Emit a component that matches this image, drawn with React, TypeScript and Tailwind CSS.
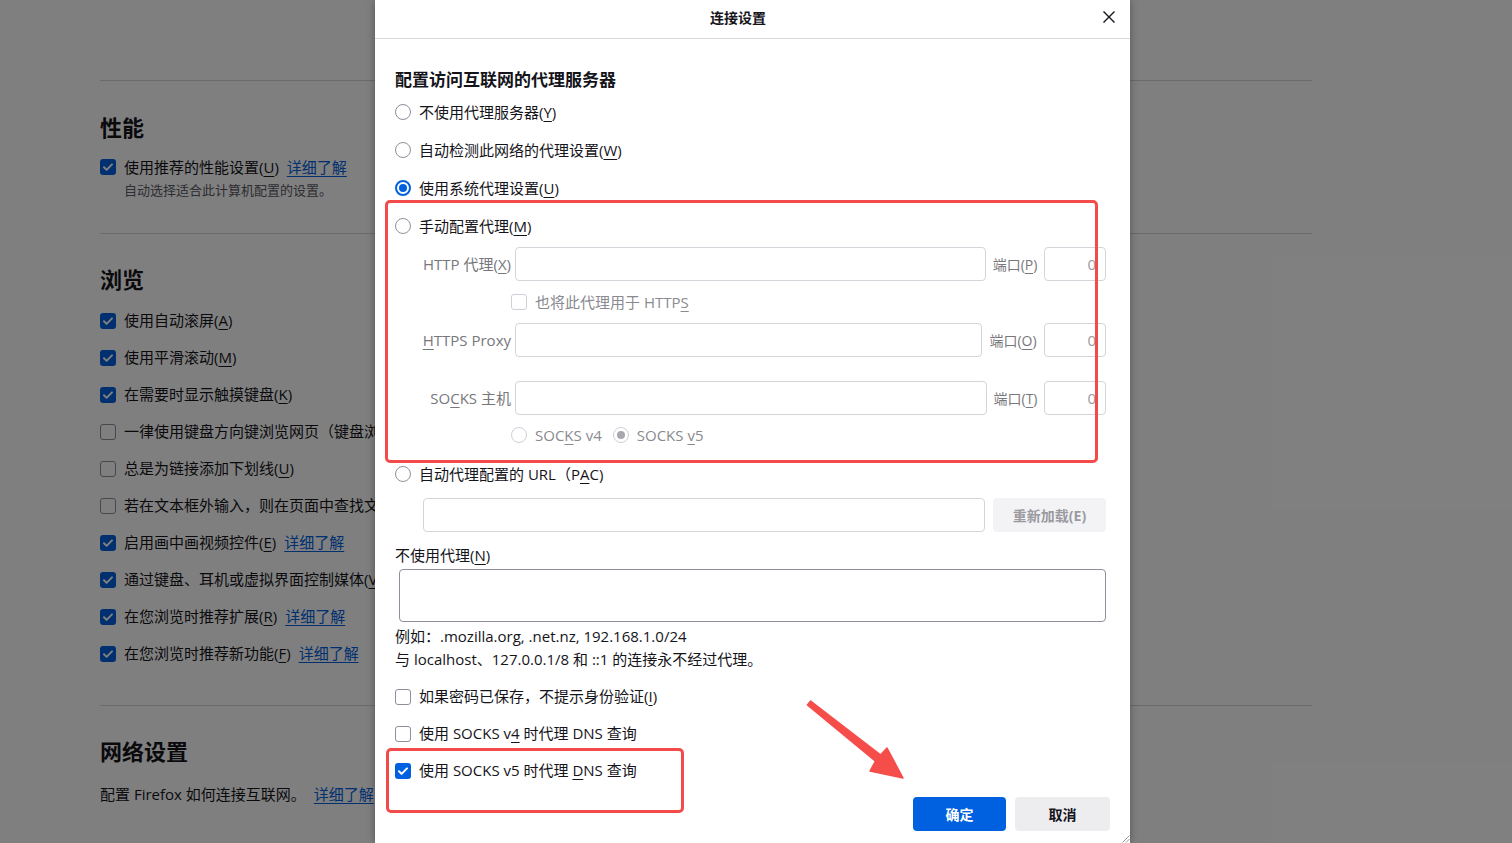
import type { ReactNode } from "react";

function U({ children }: { children: ReactNode }) {
  return <span className="underline decoration-1 underline-offset-[3px]">{children}</span>;
}

function Check({ checked = false, disabled = false }: { checked?: boolean; disabled?: boolean }) {
  if (checked)
    return (
      <span className="flex h-4 w-4 shrink-0 items-center justify-center rounded-[3px] bg-[#0061e0]">
        <svg viewBox="0 0 16 16" className="h-4 w-4" fill="none" stroke="white" strokeWidth="2" strokeLinecap="round" strokeLinejoin="round">
          <path d="M4 8.3l2.6 2.6L12 5.4" />
        </svg>
      </span>
    );
  return (
    <span
      className={
        disabled
          ? "h-4 w-4 shrink-0 rounded-[3px] border border-[#cfcfd8] bg-white"
          : "h-4 w-4 shrink-0 rounded-[3px] border border-[#8f8f9d] bg-white"
      }
    />
  );
}

function Radio({ selected = false, disabled = false }: { selected?: boolean; disabled?: boolean }) {
  if (selected && disabled)
    return (
      <span className="flex h-4 w-4 shrink-0 items-center justify-center rounded-full border border-[#cfcfd8] bg-white">
        <span className="h-2 w-2 rounded-full bg-[#a8a8b0]" />
      </span>
    );
  if (selected)
    return (
      <span className="flex h-4 w-4 shrink-0 items-center justify-center rounded-full border-2 border-[#0061e0] bg-white">
        <span className="h-2 w-2 rounded-full bg-[#0061e0]" />
      </span>
    );
  return (
    <span
      className={
        disabled
          ? "h-4 w-4 shrink-0 rounded-full border border-[#cfcfd8] bg-white"
          : "h-4 w-4 shrink-0 rounded-full border border-[#8f8f9d] bg-white"
      }
    />
  );
}

const Link = () => <span className="text-[#0061e0] underline underline-offset-[3px]">详细了解</span>;

const browseRows: { checked: boolean; text: ReactNode; link?: boolean }[] = [
  { checked: true, text: <>使用自动滚屏(<U>A</U>)</> },
  { checked: true, text: <>使用平滑滚动(<U>M</U>)</> },
  { checked: true, text: <>在需要时显示触摸键盘(<U>K</U>)</> },
  { checked: false, text: <>一律使用键盘方向键浏览网页（键盘浏览模式）(<U>C</U>)</> },
  { checked: false, text: <>总是为链接添加下划线(<U>U</U>)</> },
  { checked: false, text: <>若在文本框外输入，则在页面中查找文本(<U>X</U>)</> },
  { checked: true, text: <>启用画中画视频控件(<U>E</U>)</>, link: true },
  { checked: true, text: <>通过键盘、耳机或虚拟界面控制媒体(<U>V</U>)</> },
  { checked: true, text: <>在您浏览时推荐扩展(<U>R</U>)</>, link: true },
  { checked: true, text: <>在您浏览时推荐新功能(<U>F</U>)</>, link: true },
];

function SettingsPage() {
  return (
    <div className="w-[1312px] pl-[100px] text-[15px] text-[#15141a]">
      <div className="mt-[80px] h-px bg-[#d6d6da]" />
      <h1 className="mt-[31px] h-[30px] text-[22px] font-bold leading-[30px]">性能</h1>
      <div className="mt-[13px] flex h-[24px] items-center gap-2">
        <Check checked />
        <span>
          使用推荐的性能设置(<U>U</U>)
        </span>
        <Link />
      </div>
      <p className="mt-[2px] h-[18px] pl-6 text-[13px] leading-[18px] text-[#5b5b66]">自动选择适合此计算机配置的设置。</p>
      <div className="mt-[34px] h-px bg-[#d6d6da]" />
      <h1 className="mt-[30px] h-[30px] text-[22px] font-bold leading-[30px]">浏览</h1>
      <div className="mt-[8px]">
        {browseRows.map((r, i) => (
          <div key={i} className="flex h-[37px] items-center gap-2">
            <Check checked={r.checked} />
            <span>{r.text}</span>
            {r.link && <Link />}
          </div>
        ))}
      </div>
      <div className="mt-[33px] h-px bg-[#d6d6da]" />
      <h1 className="mt-[30px] h-[30px] text-[22px] font-bold leading-[30px]">网络设置</h1>
      <div className="mt-[16px] flex h-[24px] items-center gap-2">
        <span>配置 Firefox 如何连接互联网。</span>
        <Link />
      </div>
    </div>
  );
}

function Field({ label, width, port, portKey }: { label: ReactNode; width: number; port: string; portKey: string }) {
  return (
    <div className="flex h-[34px] items-center pl-[24px]">
      <span className="w-[92px] shrink-0 whitespace-nowrap text-right text-[#77777c]">{label}</span>
      <span className="ml-[4px] h-[34px] shrink-0 rounded-[4px] border border-[#d4d4da]" style={{ width }} />
      <span className="flex-1 whitespace-nowrap text-center text-[14px] text-[#77777c]">
        {port}(<U>{portKey}</U>)
      </span>
      <span className="flex h-[34px] w-[62px] shrink-0 items-center justify-end rounded-[4px] border border-[#d4d4da] pr-[9px] text-[#9a9aa2]">
        0
      </span>
    </div>
  );
}

function ConnectionDialog() {
  return (
    <div className="absolute left-[375px] top-0 h-[843px] w-[755px] bg-white text-[15px] text-[#15141a] shadow-[0_0_8px_rgba(0,0,0,0.35)]">
      <div className="flex h-[39px] items-center border-b border-[#dadade] pb-[4px] pl-[13px]">
        <span className="flex-1 text-center text-[14px] font-bold">连接设置</span>
        <span className="flex w-[42px] items-center justify-center">
          <svg viewBox="0 0 14 14" className="h-[14px] w-[14px]" stroke="#15141a" strokeWidth="1.4">
            <path d="M1.5 1.5l11 11M12.5 1.5l-11 11" />
          </svg>
        </span>
      </div>

      <div className="pl-[20px] pr-[24px]">
        <h2 className="mt-[29px] h-[24px] text-[17px] font-bold leading-[24px]">配置访问互联网的代理服务器</h2>
        <div className="mt-px">
          <div className="flex h-[38px] items-center gap-2">
            <Radio />
            <span>
              不使用代理服务器(<U>Y</U>)
            </span>
          </div>
          <div className="flex h-[38px] items-center gap-2">
            <Radio />
            <span>
              自动检测此网络的代理设置(<U>W</U>)
            </span>
          </div>
          <div className="flex h-[38px] items-center gap-2">
            <Radio selected />
            <span>
              使用系统代理设置(<U>U</U>)
            </span>
          </div>
          <div className="flex h-[38px] items-center gap-2">
            <Radio />
            <span>
              手动配置代理(<U>M</U>)
            </span>
          </div>
        </div>

        <div className="mt-[2px]">
          <Field label={<>HTTP 代理(<U>X</U>)</>} width={471} port="端口" portKey="P" />
          <div className="flex h-[42px] items-center gap-2 pl-[116px] text-[#8a8a90]">
            <Check disabled />
            <span>
              也将此代理用于 HTTP<U>S</U>
            </span>
          </div>
          <Field label={<><U>H</U>TTPS Proxy</>} width={467} port="端口" portKey="O" />
          <div className="mt-[24px]">
            <Field label={<>SO<U>C</U>KS 主机</>} width={472} port="端口" portKey="T" />
          </div>
          <div className="flex h-[40px] items-center pl-[116px] text-[#8a8a90]">
            <Radio disabled />
            <span className="ml-2">
              SOC<U>K</U>S v4
            </span>
            <span className="ml-[11px]">
              <Radio selected disabled />
            </span>
            <span className="ml-2">
              SOCKS <U>v</U>5
            </span>
          </div>
        </div>

        <div className="flex h-[38px] items-center gap-2">
          <Radio />
          <span>
            自动代理配置的 URL（P<U>A</U>C)
          </span>
        </div>
        <div className="mt-[5px] flex h-[34px] items-center gap-2 pl-[28px]">
          <span className="h-[34px] flex-1 rounded-[4px] border border-[#d4d4da]" />
          <span className="flex h-[34px] w-[113px] items-center justify-center rounded-[4px] bg-[#f3f3f5] text-[14px] font-bold text-[#9a9aa0]">
            重新加载(E)
          </span>
        </div>

        <div className="mt-[12px] h-[22px] leading-[22px]">
          不使用代理(<U>N</U>)
        </div>
        <div className="ml-[4px] mt-[3px] h-[53px] rounded-[4px] border border-[#8f8f9d]" />
        <div className="mt-[3px] text-[15px] leading-[23px]">
          <p>例如：.mozilla.org, .net.nz, 192.168.1.0/24</p>
          <p>与 localhost、127.0.0.1/8 和 ::1 的连接永不经过代理。</p>
        </div>

        <div className="mt-[7px]">
          <div className="flex h-[37px] items-center gap-2">
            <Check />
            <span>
              如果密码已保存，不提示身份验证(<U>I</U>)
            </span>
          </div>
          <div className="flex h-[37px] items-center gap-2">
            <Check />
            <span>
              使用 SOCKS v<U>4</U> 时代理 DNS 查询
            </span>
          </div>
          <div className="flex h-[37px] items-center gap-2">
            <Check checked />
            <span>
              使用 SOCKS v5 时代理 <U>D</U>NS 查询
            </span>
          </div>
        </div>

        <div className="-mr-[4px] mt-[8px] flex justify-end gap-[9px] text-[14px] font-bold">
          <span className="flex h-[34px] w-[93px] items-center justify-center rounded-[4px] bg-[#0061e0] text-white">确定</span>
          <span className="flex h-[34px] w-[95px] items-center justify-center rounded-[4px] bg-[#ededf0]">取消</span>
        </div>
      </div>

      <svg className="absolute bottom-0 right-0 h-[9px] w-[9px]" viewBox="0 0 9 9" stroke="#9a9a9a" strokeWidth="1">
        <path d="M8.5 1.5L1.5 8.5M8.5 5L5 8.5" />
      </svg>
    </div>
  );
}

export default function App() {
  return (
    <div className="relative h-[843px] w-full overflow-hidden bg-white [font-family:'Open_Sans','Noto_Sans_CJK_SC',sans-serif]">
      <SettingsPage />
      <div className="absolute inset-0 bg-black/50" />
      <ConnectionDialog />

      {/* annotations */}
      <div className="pointer-events-none absolute left-[385px] top-[200px] h-[263px] w-[713px] rounded-[5px] border-[3px] border-[#f34b4a]" />
      <div className="pointer-events-none absolute left-[386px] top-[748px] h-[65px] w-[298px] rounded-[5px] border-[3px] border-[#f34b4a]" />
      <svg className="pointer-events-none absolute left-0 top-0" width="1512" height="843">
        <polygon
          fill="#f54d4a"
          strokeLinejoin="round"
          stroke="#f54d4a"
          strokeWidth="1.5"
          points="810.6,701 880.5,754.9 887,748 903,778 870,771 875.5,761.1 807.4,705"
        />
      </svg>
    </div>
  );
}
